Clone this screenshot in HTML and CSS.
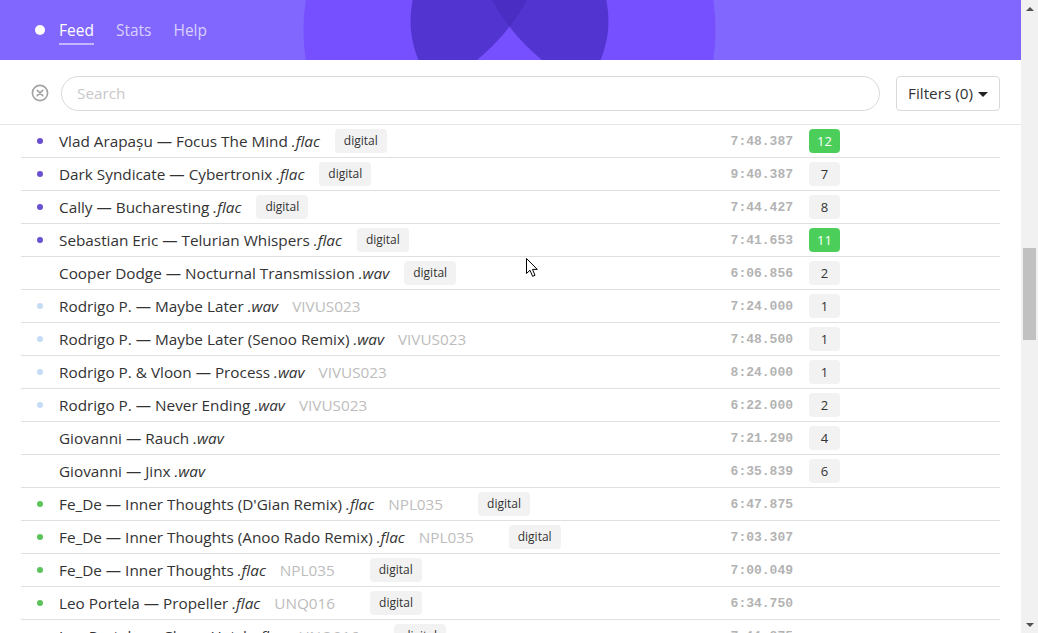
FILE: index.html
```html
<!DOCTYPE html>
<html>
<head>
<meta charset="utf-8">
<link rel="stylesheet" href="styles.css">
</head>
<body>
<div class="app">
  <div class="main">
    <header class="header">
      <svg class="header-art" width="1021" height="60" viewBox="0 0 1021 60">
        <defs>
          <clipPath id="cm"><circle cx="509.5" cy="21" r="99"/></clipPath>
          <clipPath id="cl"><circle cx="347" cy="-99" r="205.4"/></clipPath>
        </defs>
        <circle cx="509.5" cy="30" r="206" fill="#7650fe"/>
        <g clip-path="url(#cm)">
          <rect x="0" y="0" width="1021" height="60" fill="#7650fe"/>
          <circle cx="347" cy="-99" r="205.4" fill="#5234d0"/>
          <circle cx="672" cy="-99" r="205.4" fill="#5234d0"/>
          <circle cx="672" cy="-99" r="205.4" fill="#4a2dc2" clip-path="url(#cl)"/>
        </g>
      </svg>
      <nav class="nav">
        <span class="nav-dot"></span>
        <a class="nav-link active">Feed</a>
        <a class="nav-link">Stats</a>
        <a class="nav-link">Help</a>
      </nav>
    </header>
    <section class="searchbar">
      <svg class="clear-icon" width="18" height="18" viewBox="0 0 18 18">
        <circle cx="9" cy="9" r="7.6" fill="none" stroke="#a3a3a3" stroke-width="1.6"/>
        <path d="M6.3 6.3 L11.7 11.7 M11.7 6.3 L6.3 11.7" stroke="#a3a3a3" stroke-width="1.7" stroke-linecap="round"/>
      </svg>
      <div class="search-input">Search</div>
      <div class="filters">Filters (0) <span class="caret"></span></div>
    </section>
    <div class="list">
      <div class="row"><span class="dot purple"></span><span class="title">Vlad Arapașu — Focus The Mind <i>.flac</i></span><span class="tag">digital</span><span class="dur">7:48.387</span><span class="count green">12</span></div>
      <div class="row"><span class="dot purple"></span><span class="title">Dark Syndicate — Cybertronix <i>.flac</i></span><span class="tag">digital</span><span class="dur">9:40.387</span><span class="count">7</span></div>
      <div class="row"><span class="dot purple"></span><span class="title">Cally — Bucharesting <i>.flac</i></span><span class="tag">digital</span><span class="dur">7:44.427</span><span class="count">8</span></div>
      <div class="row"><span class="dot purple"></span><span class="title">Sebastian Eric — Telurian Whispers <i>.flac</i></span><span class="tag">digital</span><span class="dur">7:41.653</span><span class="count green">11</span></div>
      <div class="row"><span class="dot"></span><span class="title">Cooper Dodge — Nocturnal Transmission <i>.wav</i></span><span class="tag">digital</span><span class="dur">6:06.856</span><span class="count">2</span></div>
      <div class="row"><span class="dot blue"></span><span class="title">Rodrigo P. — Maybe Later <i>.wav</i></span><span class="cat">VIVUS023</span><span class="dur">7:24.000</span><span class="count">1</span></div>
      <div class="row"><span class="dot blue"></span><span class="title">Rodrigo P. — Maybe Later (Senoo Remix) <i>.wav</i></span><span class="cat">VIVUS023</span><span class="dur">7:48.500</span><span class="count">1</span></div>
      <div class="row"><span class="dot blue"></span><span class="title">Rodrigo P. &amp; Vloon — Process <i>.wav</i></span><span class="cat">VIVUS023</span><span class="dur">8:24.000</span><span class="count">1</span></div>
      <div class="row"><span class="dot blue"></span><span class="title">Rodrigo P. — Never Ending <i>.wav</i></span><span class="cat">VIVUS023</span><span class="dur">6:22.000</span><span class="count">2</span></div>
      <div class="row"><span class="dot"></span><span class="title">Giovanni — Rauch <i>.wav</i></span><span class="dur">7:21.290</span><span class="count">4</span></div>
      <div class="row"><span class="dot"></span><span class="title">Giovanni — Jinx <i>.wav</i></span><span class="dur">6:35.839</span><span class="count">6</span></div>
      <div class="row"><span class="dot green"></span><span class="title">Fe_De — Inner Thoughts (D'Gian Remix) <i>.flac</i></span><span class="cat">NPL035</span><span class="tag after-cat">digital</span><span class="dur">6:47.875</span><span class="count none"></span></div>
      <div class="row"><span class="dot green"></span><span class="title">Fe_De — Inner Thoughts (Anoo Rado Remix) <i>.flac</i></span><span class="cat">NPL035</span><span class="tag after-cat">digital</span><span class="dur">7:03.307</span><span class="count none"></span></div>
      <div class="row"><span class="dot green"></span><span class="title">Fe_De — Inner Thoughts <i>.flac</i></span><span class="cat">NPL035</span><span class="tag after-cat">digital</span><span class="dur">7:00.049</span><span class="count none"></span></div>
      <div class="row"><span class="dot green"></span><span class="title">Leo Portela — Propeller <i>.flac</i></span><span class="cat">UNQ016</span><span class="tag after-cat">digital</span><span class="dur">6:34.750</span><span class="count none"></span></div>
      <div class="row"><span class="dot green"></span><span class="title">Leo Portela — Chase Hatch <i>.flac</i></span><span class="cat">UNQ016</span><span class="tag after-cat">digital</span><span class="dur">7:11.875</span><span class="count none"></span></div>
    </div>
  </div>
  <div class="scrollbar">
    <span class="sb-arrow up"></span>
    <div class="sb-track"><div class="sb-thumb"></div></div>
    <span class="sb-arrow down"></span>
  </div>
</div>
<svg class="cursor" width="13" height="20" viewBox="0 0 13 20">
  <path d="M0.5 0.5 L0.5 15.5 L4 12.2 L6.6 18.3 L9 17.3 L6.5 11.4 L11.3 11.4 Z" fill="#fff" stroke="#000" stroke-width="1"/>
</svg>
</body>
</html>
```
FILE: styles.css
```css
* { box-sizing: border-box; }
html, body { margin: 0; padding: 0; }
body {
  width: 1038px;
  height: 633px;
  overflow: hidden;
  font-family: "Open Sans", "Noto Sans", sans-serif;
  color: #333;
  background: #fff;
  position: relative;
}
.app { display: flex; height: 633px; }
.main { width: 1021px; display: flex; flex-direction: column; overflow: hidden; }

.header {
  height: 60px;
  background: #8167fd;
  position: relative;
  overflow: hidden;
  flex: none;
}
.header-art { position: absolute; left: 0; top: 0; }
.nav {
  position: relative;
  display: flex;
  align-items: center;
  height: 60px;
  padding-left: 35px;
}
.nav-dot {
  width: 10px; height: 10px; border-radius: 50%;
  background: #fff;
  margin-right: 14px;
}
.nav-link {
  font-size: 15.5px;
  color: #d8d0ff;
  margin-right: 22px;
  line-height: 22px;
  position: relative;
}
.nav-link.active { color: #fff; }
.nav-link.active::after {
  content: "";
  position: absolute;
  left: 0; right: 0; bottom: -4px;
  height: 2px;
  background: #c2b6ff;
}

.searchbar {
  flex: none;
  height: 65px;
  display: flex;
  align-items: center;
  padding: 2px 21px 0 31px;
  border-bottom: 1px solid #e6e6e6;
}
.clear-icon { flex: none; margin-right: 12px; }
.search-input {
  flex: 1;
  height: 35px;
  border: 1px solid #d9d9d9;
  border-radius: 18px;
  padding-left: 15px;
  display: flex;
  align-items: center;
  color: #c8c8c8;
  font-size: 15.3px;
}
.filters {
  flex: none;
  width: 104px;
  height: 35px;
  margin-left: 16px;
  border: 1px solid #d9d9d9;
  border-radius: 4px;
  display: flex;
  align-items: center;
  justify-content: center;
  font-size: 15.3px;
  color: #333;
}
.caret {
  display: inline-block;
  width: 0; height: 0;
  border-left: 5px solid transparent;
  border-right: 5px solid transparent;
  border-top: 5px solid #222;
  margin-left: 5px;
  margin-top: 2px;
}

.list { margin: 0 21px; }
.row {
  height: 33px;
  display: flex;
  align-items: center;
  border-bottom: 1px solid #e0e0e0;
  font-size: 15.3px;
  white-space: nowrap;
}
.dot {
  flex: none;
  width: 6px; height: 6px; border-radius: 50%;
  margin-left: 16px;
  margin-right: 16px;
}
.dot.purple { background: #6a4fd0; }
.dot.blue { background: #c5dcf4; }
.dot.green { background: #5cc35a; }
.title { color: #333; }
.title i { font-style: italic; }
.cat { color: #bdbdbd; margin-left: 14px; }
.tag {
  height: 24px;
  line-height: 24px;
  padding: 0 9px;
  background: #f2f2f2;
  border-radius: 4px;
  font-size: 12px;
  color: #333;
  margin-left: 15px;
}
.tag.after-cat { margin-left: 35px; }
.dur {
  margin-left: auto;
  font-family: "Liberation Mono", "DejaVu Sans Mono", monospace;
  font-weight: bold;
  font-size: 13px;
  color: #b3b3b3;
  width: 90px;
  text-align: right;
}
.count {
  flex: none;
  width: 31px;
  height: 24px;
  border-radius: 4px;
  background: #f2f2f2;
  font-size: 13px;
  color: #333;
  display: flex;
  align-items: center;
  justify-content: center;
  margin-left: 16px;
  margin-right: 160px;
}
.count.green { background: #4ccf5a; color: #fff; }
.count.none { background: transparent; }

.scrollbar {
  width: 17px;
  flex: none;
  background: #f1f1f1;
  display: flex;
  flex-direction: column;
  align-items: center;
}
.sb-arrow {
  flex: none;
  width: 0; height: 0;
  border-left: 4px solid transparent;
  border-right: 4px solid transparent;
}
.sb-arrow.up { border-bottom: 4px solid #505050; margin-top: 7px; }
.sb-arrow.down { border-top: 4px solid #505050; margin-bottom: 6px; }
.sb-track { flex: 1; width: 100%; padding: 0 2px; }
.sb-thumb {
  margin-top: 237px;
  height: 92px;
  background: #c1c1c1;
}
.cursor { position: absolute; left: 526px; top: 258px; }
```
